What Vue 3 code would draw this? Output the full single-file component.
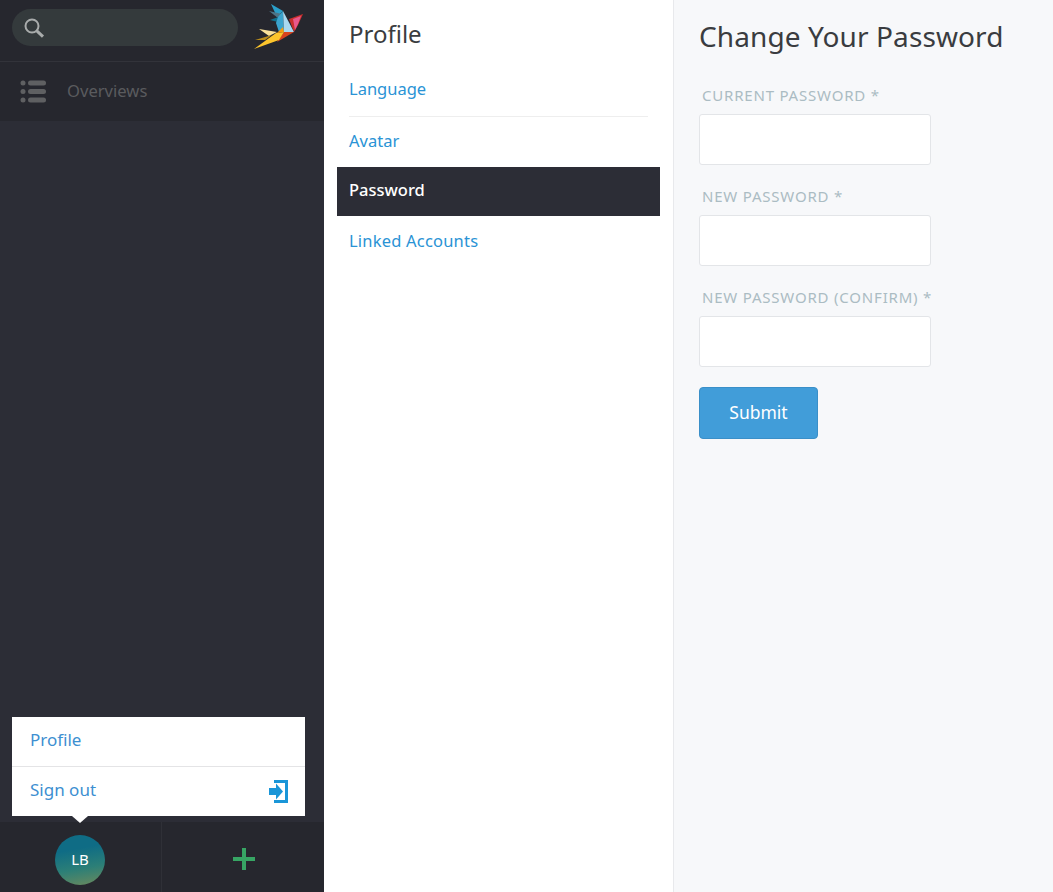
<script setup>
const menu = [
  { label: 'Language', active: false },
  { label: 'Avatar', active: false },
  { label: 'Password', active: true },
  { label: 'Linked Accounts', active: false }
]

const fields = ['Current Password *', 'New Password *', 'New Password (confirm) *']
</script>

<template>
  <div class="page">
    <aside class="sidebar">
      <div class="top">
        <div class="search">
          <svg class="search-icon" width="22" height="22" viewBox="0 0 22 22">
            <circle cx="9" cy="9" r="6.5" fill="none" stroke="#a9acac" stroke-width="2" />
            <path d="M13.8 13.8L20 19.6" stroke="#a9acac" stroke-width="3" />
          </svg>
        </div>
        <svg class="logo" width="52" height="50" viewBox="0 0 52 50">
          <polygon points="19,1 31,8 25,14" fill="#2a9fc9" />
          <polygon points="17,8 30,11 26,15" fill="#4d7486" />
          <polygon points="18,17 29,13 26,19" fill="#12708c" />
          <polygon points="31,8 26,14 24,20 27,29 32,29" fill="#3aa3cd" />
          <polygon points="31,8 42,29 32,29" fill="#a9d8ef" />
          <polygon points="37,16 51,11 46,22 42,29" fill="#c92f2c" />
          <polygon points="41,16 49,13 46,21 43,27" fill="#e8588c" />
          <polygon points="42,29 32,29 25,39" fill="#d8431e" />
          <polygon points="2,46 24,30 32,29 27,37" fill="#fdc52c" />
          <polygon points="7,26 25,29 17,33" fill="#fbe29a" />
          <polygon points="3,37 20,32 13,37" fill="#b98c1c" />
          <polygon points="25,30 31,24 32,29" fill="#f49b12" />
        </svg>
      </div>

      <div class="nav-row">
        <svg width="26" height="23" viewBox="0 0 26 23">
          <g fill="#5f6062">
            <circle cx="3" cy="3" r="2.5" />
            <circle cx="3" cy="11.5" r="2.5" />
            <circle cx="3" cy="20" r="2.5" />
            <rect x="8" y="0.5" width="18" height="5" rx="2.5" />
            <rect x="8" y="9" width="18" height="5" rx="2.5" />
            <rect x="8" y="17.5" width="18" height="5" rx="2.5" />
          </g>
        </svg>
        <span>Overviews</span>
      </div>

      <div class="spacer"></div>

      <div class="popup">
        <a class="popup-item">Profile</a>
        <a class="popup-item">
          Sign out
          <svg width="19" height="23" viewBox="0 0 19 23">
            <path d="M5 1.5H17.5V21.5H5" fill="none" stroke="#1a96d8" stroke-width="3" />
            <path d="M0 8H7V3.5L14 11.5L7 19.5V15H0Z" fill="#1a96d8" />
          </svg>
        </a>
      </div>

      <div class="bottom">
        <div class="bottom-cell first">
          <div class="avatar">LB</div>
        </div>
        <div class="bottom-cell add">
          <svg width="22" height="22" viewBox="0 0 22 22">
            <path d="M11 0V22M0 11H22" stroke="#37a564" stroke-width="4" />
          </svg>
        </div>
      </div>
    </aside>

    <nav class="menu">
      <h2>Profile</h2>
      <ul>
        <li v-for="item in menu" :key="item.label" :class="{ active: item.active }">
          {{ item.label }}
        </li>
      </ul>
    </nav>

    <main class="content">
      <h1>Change Your Password</h1>
      <form @submit.prevent>
        <div v-for="f in fields" :key="f" class="field">
          <label>{{ f }}</label>
          <input type="password" />
        </div>
        <button type="submit">Submit</button>
      </form>
    </main>
  </div>
</template>

<style scoped>
.page {
  display: flex;
  height: 892px;
  overflow: hidden;
  font-family: "Noto Sans", "Open Sans", sans-serif;
}

.sidebar {
  width: 324px;
  flex: none;
  display: flex;
  flex-direction: column;
  position: relative;
  background: #2c2d36;
}

.top {
  height: 62px;
  flex: none;
  box-sizing: border-box;
  display: flex;
  justify-content: space-between;
  padding: 0 20px 0 12px;
  background: #26272e;
  border-bottom: 1px solid #32333a;
}

.search {
  width: 226px;
  height: 37px;
  margin-top: 9px;
  border-radius: 19px;
  background: #343a3c;
  display: flex;
  align-items: center;
  padding-left: 11px;
  box-sizing: border-box;
}

.logo {
  margin-top: 3px;
}

.nav-row {
  height: 59px;
  flex: none;
  display: flex;
  align-items: center;
  gap: 21px;
  padding-left: 20px;
  background: #26272e;
  color: #5a5b5e;
  font-size: 16.6px;
}

.nav-row span {
  margin-bottom: 2px;
}

.spacer {
  flex: 1;
}

.popup {
  position: absolute;
  left: 12px;
  bottom: 76px;
  width: 293px;
  background: #fff;
}

.popup::after {
  content: "";
  position: absolute;
  left: 60px;
  bottom: -7px;
  border-left: 8px solid transparent;
  border-right: 8px solid transparent;
  border-top: 7px solid #fff;
}

.popup-item {
  height: 49px;
  box-sizing: border-box;
  display: flex;
  align-items: center;
  justify-content: space-between;
  padding: 0 17px 4px 18px;
  color: #3d8fd1;
  font-size: 17px;
}

.popup-item + .popup-item {
  height: 50px;
  padding-bottom: 5px;
  border-top: 1px solid #e4e4e6;
}

.popup-item svg {
  margin-top: 5px;
}

.bottom {
  height: 70px;
  flex: none;
  display: flex;
  background: #26272e;
}

.bottom-cell {
  display: flex;
  align-items: center;
  justify-content: center;
}

.first {
  width: 161px;
  padding-right: 1px;
  box-sizing: border-box;
  flex: none;
}

.add {
  flex: 1;
  padding: 4px 0 0 2px;
  box-sizing: border-box;
  border-left: 1px solid #2f3037;
}

.avatar {
  width: 50px;
  height: 50px;
  box-sizing: border-box;
  padding-bottom: 2px;
  border-radius: 50%;
  margin-top: 6px;
  display: flex;
  align-items: center;
  justify-content: center;
  color: #fff;
  font-size: 15px;
  background: linear-gradient(170deg, #0f6c85 30%, #2c7f77 65%, #6c8a5c 100%);
}

.menu {
  width: 350px;
  flex: none;
  box-sizing: border-box;
  padding: 0 13px;
  background: #fff;
  border-right: 1px solid #e8e9ec;
}

.menu h2 {
  margin: 0;
  height: 66px;
  padding: 17px 0 0 12px;
  box-sizing: border-box;
  font-size: 24px;
  line-height: 34px;
  font-weight: 400;
  color: #3a3c40;
}

.menu ul {
  margin: 0;
  padding: 0;
  list-style: none;
}

.menu li {
  height: 50px;
  box-sizing: border-box;
  display: flex;
  align-items: center;
  padding: 0 12px 4px;
  color: #2a93d5;
  font-size: 16.5px;
}

.menu li:first-child {
  height: 51px;
  margin: 0 12px;
  padding: 0 0 6px;
  border-bottom: 1px solid #eeeeee;
}

.menu li.active {
  height: 49px;
  color: #fff;
  font-weight: 500;
  background: #2c2d36;
}

.menu li:last-child {
  padding-bottom: 2px;
  letter-spacing: 0.2px;
}

.content {
  flex: 1;
  padding: 0 25px;
  background: #f7f8fa;
}

h1 {
  margin: 0;
  padding-top: 16px;
  font-size: 28px;
  line-height: 40px;
  font-weight: 400;
  letter-spacing: 0.1px;
  color: #3a3c40;
}

form {
  margin-top: 26px;
}

.field {
  margin-bottom: 18px;
}

label {
  display: block;
  height: 32px;
  padding: 1px 0 0 3px;
  box-sizing: border-box;
  line-height: 24px;
  font-size: 15px;
  letter-spacing: 0.8px;
  text-transform: uppercase;
  color: #abbcc3;
}

input {
  display: block;
  width: 232px;
  height: 51px;
  box-sizing: border-box;
  background: #fff;
  border: 1px solid #e3e5e8;
  border-radius: 3px;
  outline: none;
}

button {
  width: 119px;
  height: 52px;
  margin-top: 2px;
  padding: 0 0 2px;
  background: #419dd9;
  border: 1px solid #3a8fc8;
  border-radius: 4px;
  color: #fff;
  font-family: inherit;
  font-size: 17.5px;
  font-weight: 400;
}
</style>
